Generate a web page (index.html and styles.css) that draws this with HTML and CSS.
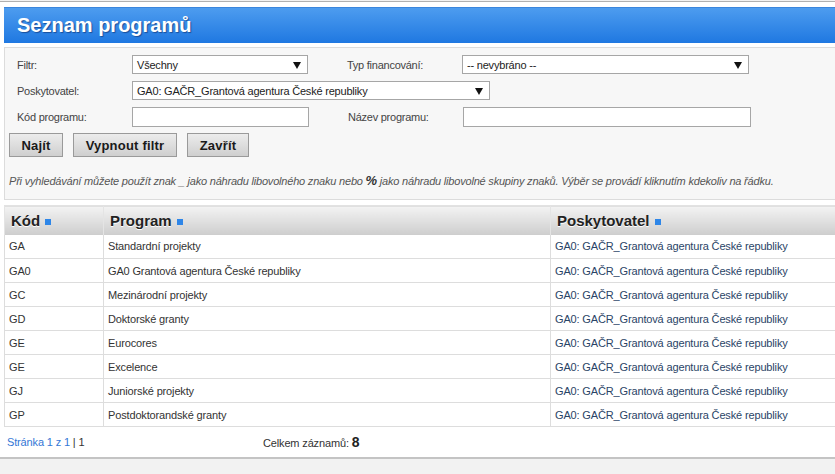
FILE: index.html
```html
<!DOCTYPE html>
<html lang="cs">
<head>
<meta charset="utf-8">
<title>Seznam programů</title>
<link rel="stylesheet" href="styles.css">
</head>
<body>
<div class="page">
  <div class="titlebar"><h1>Seznam programů</h1></div>

  <div class="filter">
    <div class="frow">
      <span class="lbl">Filtr:</span>
      <div class="sel w176"><span>Všechny</span><i class="arr"></i></div>
      <span class="lbl lbl2">Typ financování:</span>
      <div class="sel w287"><span>-- nevybráno --</span><i class="arr"></i></div>
    </div>
    <div class="frow">
      <span class="lbl">Poskytovatel:</span>
      <div class="sel w358"><span>GA0: GAČR_Grantová agentura České republiky</span><i class="arr"></i></div>
    </div>
    <div class="frow">
      <span class="lbl">Kód programu:</span>
      <div class="inp w177"></div>
      <span class="lbl lbl2">Název programu:</span>
      <div class="inp w288"></div>
    </div>
    <div class="buttons">
      <button class="btn">Najít</button>
      <button class="btn">Vypnout filtr</button>
      <button class="btn">Zavřít</button>
    </div>
    <p class="hint">Při vyhledávání můžete použít znak _ jako náhradu libovolného znaku nebo <b>%</b> jako náhradu libovolné skupiny znaků. Výběr se provádí kliknutím kdekoliv na řádku.</p>
  </div>

  <table class="grid">
    <thead>
      <tr>
        <th class="c1">Kód <i class="sq"></i></th>
        <th class="c2">Program <i class="sq"></i></th>
        <th class="c3">Poskytovatel <i class="sq"></i></th>
      </tr>
    </thead>
    <tbody>
      <tr><td>GA</td><td>Standardní projekty</td><td class="prov">GA0: GAČR_Grantová agentura České republiky</td></tr>
      <tr><td>GA0</td><td>GA0 Grantová agentura České republiky</td><td class="prov">GA0: GAČR_Grantová agentura České republiky</td></tr>
      <tr><td>GC</td><td>Mezinárodní projekty</td><td class="prov">GA0: GAČR_Grantová agentura České republiky</td></tr>
      <tr><td>GD</td><td>Doktorské granty</td><td class="prov">GA0: GAČR_Grantová agentura České republiky</td></tr>
      <tr><td>GE</td><td>Eurocores</td><td class="prov">GA0: GAČR_Grantová agentura České republiky</td></tr>
      <tr><td>GE</td><td>Excelence</td><td class="prov">GA0: GAČR_Grantová agentura České republiky</td></tr>
      <tr><td>GJ</td><td>Juniorské projekty</td><td class="prov">GA0: GAČR_Grantová agentura České republiky</td></tr>
      <tr><td>GP</td><td>Postdoktorandské granty</td><td class="prov">GA0: GAČR_Grantová agentura České republiky</td></tr>
    </tbody>
  </table>

  <div class="footer">
    <div class="pager"><a href="#">Stránka 1 z 1</a> | 1</div>
    <div class="total">Celkem záznamů: <b>8</b></div>
  </div>
</div>
</body>
</html>
```

FILE: styles.css
```css
html, body {
  margin: 0;
  padding: 0;
  background: #f2f2f2;
  overflow: hidden;
}
body {
  font-family: "Liberation Sans", Arial, sans-serif;
  font-size: 11px;
  letter-spacing: -0.15px;
  color: #333;
}
.page {
  margin-top: 1px;
  width: 880px;
  background: #fff;
  border-top: 1px solid #b0b0b0;
  border-bottom: 2px solid #c4c4c4;
  padding: 5px 0 0 4px;
  box-sizing: border-box;
}
.titlebar {
  height: 36px;
  background: linear-gradient(to bottom, #4d9cef 0%, #1f78e1 100%);
  border-top: 1px solid #3b86dc;
  box-sizing: border-box;
}
.titlebar h1 {
  margin: 0;
  padding-left: 13px;
  line-height: 35px;
  font-size: 20px;
  letter-spacing: 0;
  font-weight: bold;
  color: #fff;
  text-shadow: 1px 1px 1px #1a4f9a;
}
.filter {
  margin-top: 4px;
  height: 153px;
  box-sizing: border-box;
  background: #f7f7f7;
  border: 1px solid #dcdcdc;
  border-right: none;
  padding: 7px 0 0 0;
}
.frow {
  display: flex;
  align-items: center;
  height: 19px;
  margin-bottom: 7px;
}
.lbl {
  width: 115px;
  padding-left: 12px;
  box-sizing: content-box;
  color: #444;
  font-size: 11px;
  letter-spacing: -0.25px;
}
.lbl2 {
  padding-left: 0;
  margin-left: 39px;
}
.sel, .inp {
  height: 19px;
  box-sizing: border-box;
  background: #fff;
  border: 1px solid #a6a6a6;
  display: flex;
  align-items: center;
  justify-content: space-between;
  padding: 0 6px 0 4px;
  color: #222;
  font-size: 11px;
  letter-spacing: -0.2px;
}
.w176 { width: 176px; }
.w287 { width: 287px; }
.w358 { width: 358px; }
.w177 { width: 177px; }
.w288 { width: 288px; }
.inp { height: 20px; }
.arr {
  width: 0;
  height: 0;
  border-left: 4px solid transparent;
  border-right: 4px solid transparent;
  border-top: 7px solid #111;
  margin-top: 1px;
}
.buttons {
  display: flex;
  gap: 10px;
  padding-left: 4px;
  margin-top: 3px;
}
.btn {
  height: 24px;
  padding: 0;
  font-family: "Liberation Sans", Arial, sans-serif;
  font-size: 13px;
  letter-spacing: 0.2px;
  font-weight: bold;
  color: #1a1a1a;
  background: linear-gradient(to bottom, #ececec 0%, #cfcfcf 100%);
  border: 1px solid #9a9a9a;
  border-radius: 0;
}
.btn:first-child { width: 54px; }
.btn:nth-child(2) { width: 104px; }
.btn:nth-child(3) { width: 62px; }
.hint {
  margin: 16px 0 0 4px;
  font-style: italic;
  font-size: 11px;
  letter-spacing: -0.2px;
  color: #555;
}
.hint b {
  font-size: 13px;
  color: #333;
}
.grid {
  margin-top: 5px;
  border-collapse: collapse;
  width: 876px;
  table-layout: fixed;
  border-left: 1px solid #dcdcdc;
}
.grid th {
  height: 29px;
  text-align: left;
  font-size: 15px;
  letter-spacing: 0;
  font-weight: bold;
  color: #222;
  padding: 0 6px;
  background: linear-gradient(to bottom, #f3f3f3 0%, #cdcdcd 100%);
  border-left: 1px solid #e4e4e4;
  border-top: 1px solid #e2e2e2;
  box-sizing: border-box;
  text-shadow: 0 1px 0 #fff;
}
.grid th.c1 { width: 99px; }
.grid th.c2 { width: 447px; }
.sq {
  display: inline-block;
  width: 6px;
  height: 6px;
  background: #2e86e8;
  vertical-align: 1px;
  margin-left: 1px;
}
.grid td {
  height: 24px;
  padding: 0 4px;
  box-sizing: border-box;
  border: 1px solid #dddddd;
  border-top: none;
  font-size: 11px;
  color: #333;
  white-space: nowrap;
  overflow: hidden;
}
.grid td.prov { color: #2a4466; }
.footer {
  display: flex;
  align-items: center;
  height: 30px;
  padding-left: 3px;
}
.pager {
  width: 256px;
  color: #333;
}
.pager a {
  color: #3478d6;
  text-decoration: none;
}
.total b {
  font-size: 14px;
  color: #222;
}
```
